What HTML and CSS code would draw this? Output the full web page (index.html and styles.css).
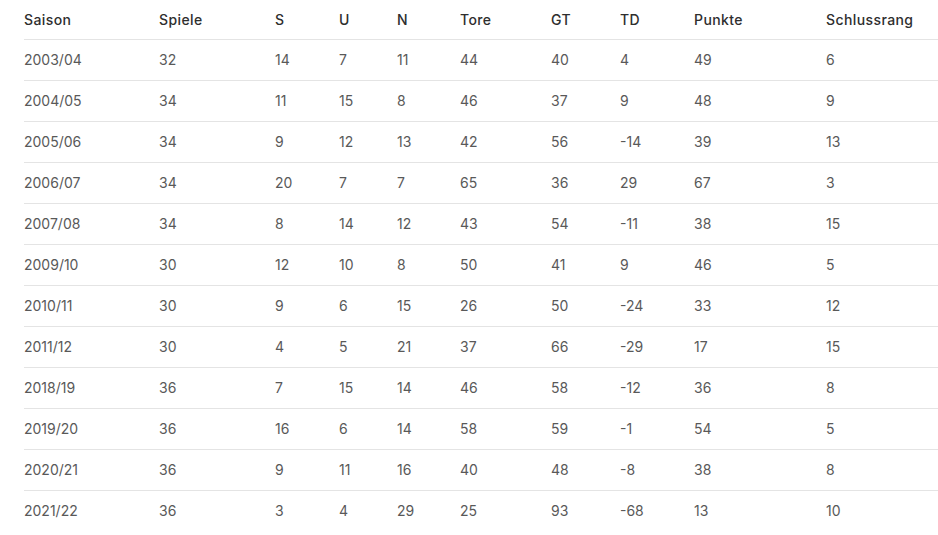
FILE: index.html
```html
<!DOCTYPE html>
<html lang="de">
<head>
<meta charset="utf-8">
<title>Saisonstatistik</title>
<link rel="stylesheet" href="styles.css">
</head>
<body>
<table class="stats">
  <colgroup>
    <col class="c-saison"><col class="c-spiele"><col class="c-s"><col class="c-u"><col class="c-n"><col class="c-tore"><col class="c-gt"><col class="c-td"><col class="c-punkte"><col class="c-rang">
  </colgroup>
  <thead>
    <tr><th>Saison</th><th>Spiele</th><th>S</th><th>U</th><th>N</th><th>Tore</th><th>GT</th><th>TD</th><th>Punkte</th><th>Schlussrang</th></tr>
  </thead>
  <tbody>
    <tr><td>2003/04</td><td>32</td><td>14</td><td>7</td><td>11</td><td>44</td><td>40</td><td>4</td><td>49</td><td>6</td></tr>
    <tr><td>2004/05</td><td>34</td><td>11</td><td>15</td><td>8</td><td>46</td><td>37</td><td>9</td><td>48</td><td>9</td></tr>
    <tr><td>2005/06</td><td>34</td><td>9</td><td>12</td><td>13</td><td>42</td><td>56</td><td>-14</td><td>39</td><td>13</td></tr>
    <tr><td>2006/07</td><td>34</td><td>20</td><td>7</td><td>7</td><td>65</td><td>36</td><td>29</td><td>67</td><td>3</td></tr>
    <tr><td>2007/08</td><td>34</td><td>8</td><td>14</td><td>12</td><td>43</td><td>54</td><td>-11</td><td>38</td><td>15</td></tr>
    <tr><td>2009/10</td><td>30</td><td>12</td><td>10</td><td>8</td><td>50</td><td>41</td><td>9</td><td>46</td><td>5</td></tr>
    <tr><td>2010/11</td><td>30</td><td>9</td><td>6</td><td>15</td><td>26</td><td>50</td><td>-24</td><td>33</td><td>12</td></tr>
    <tr><td>2011/12</td><td>30</td><td>4</td><td>5</td><td>21</td><td>37</td><td>66</td><td>-29</td><td>17</td><td>15</td></tr>
    <tr><td>2018/19</td><td>36</td><td>7</td><td>15</td><td>14</td><td>46</td><td>58</td><td>-12</td><td>36</td><td>8</td></tr>
    <tr><td>2019/20</td><td>36</td><td>16</td><td>6</td><td>14</td><td>58</td><td>59</td><td>-1</td><td>54</td><td>5</td></tr>
    <tr><td>2020/21</td><td>36</td><td>9</td><td>11</td><td>16</td><td>40</td><td>48</td><td>-8</td><td>38</td><td>8</td></tr>
    <tr><td>2021/22</td><td>36</td><td>3</td><td>4</td><td>29</td><td>25</td><td>93</td><td>-68</td><td>13</td><td>10</td></tr>
  </tbody>
</table>
</body>
</html>
```
FILE: styles.css
```css
html, body {
  margin: 0;
  padding: 0;
  background: #ffffff;
}
body {
  font-family: Inter, "Open Sans", "DejaVu Sans", sans-serif;
  font-size: 14px;
  color: #555555;
}
.stats {
  margin-left: 24px;
  width: 914px;
  border-collapse: collapse;
  table-layout: fixed;
}
.stats th,
.stats td {
  text-align: left;
  padding: 0;
  white-space: nowrap;
  overflow: hidden;
}
.stats th {
  height: 39px;
  font-weight: 500;
  letter-spacing: 0.4px;
  color: #2e2e2e;
  border-bottom: 1px solid #e4e4e4;
  vertical-align: middle;
}
.stats td {
  height: 38px;
  padding-bottom: 2px;
  font-weight: 400;
  color: #595959;
  border-bottom: 1px solid #e4e4e4;
  vertical-align: middle;
}
.stats tbody tr:last-child td {
  border-bottom: none;
}
.c-saison { width: 135px; }
.c-spiele { width: 116px; }
.c-s { width: 64px; }
.c-u { width: 58px; }
.c-n { width: 63px; }
.c-tore { width: 91px; }
.c-gt { width: 69px; }
.c-td { width: 74px; }
.c-punkte { width: 132px; }
.c-rang { width: 112px; }
```
